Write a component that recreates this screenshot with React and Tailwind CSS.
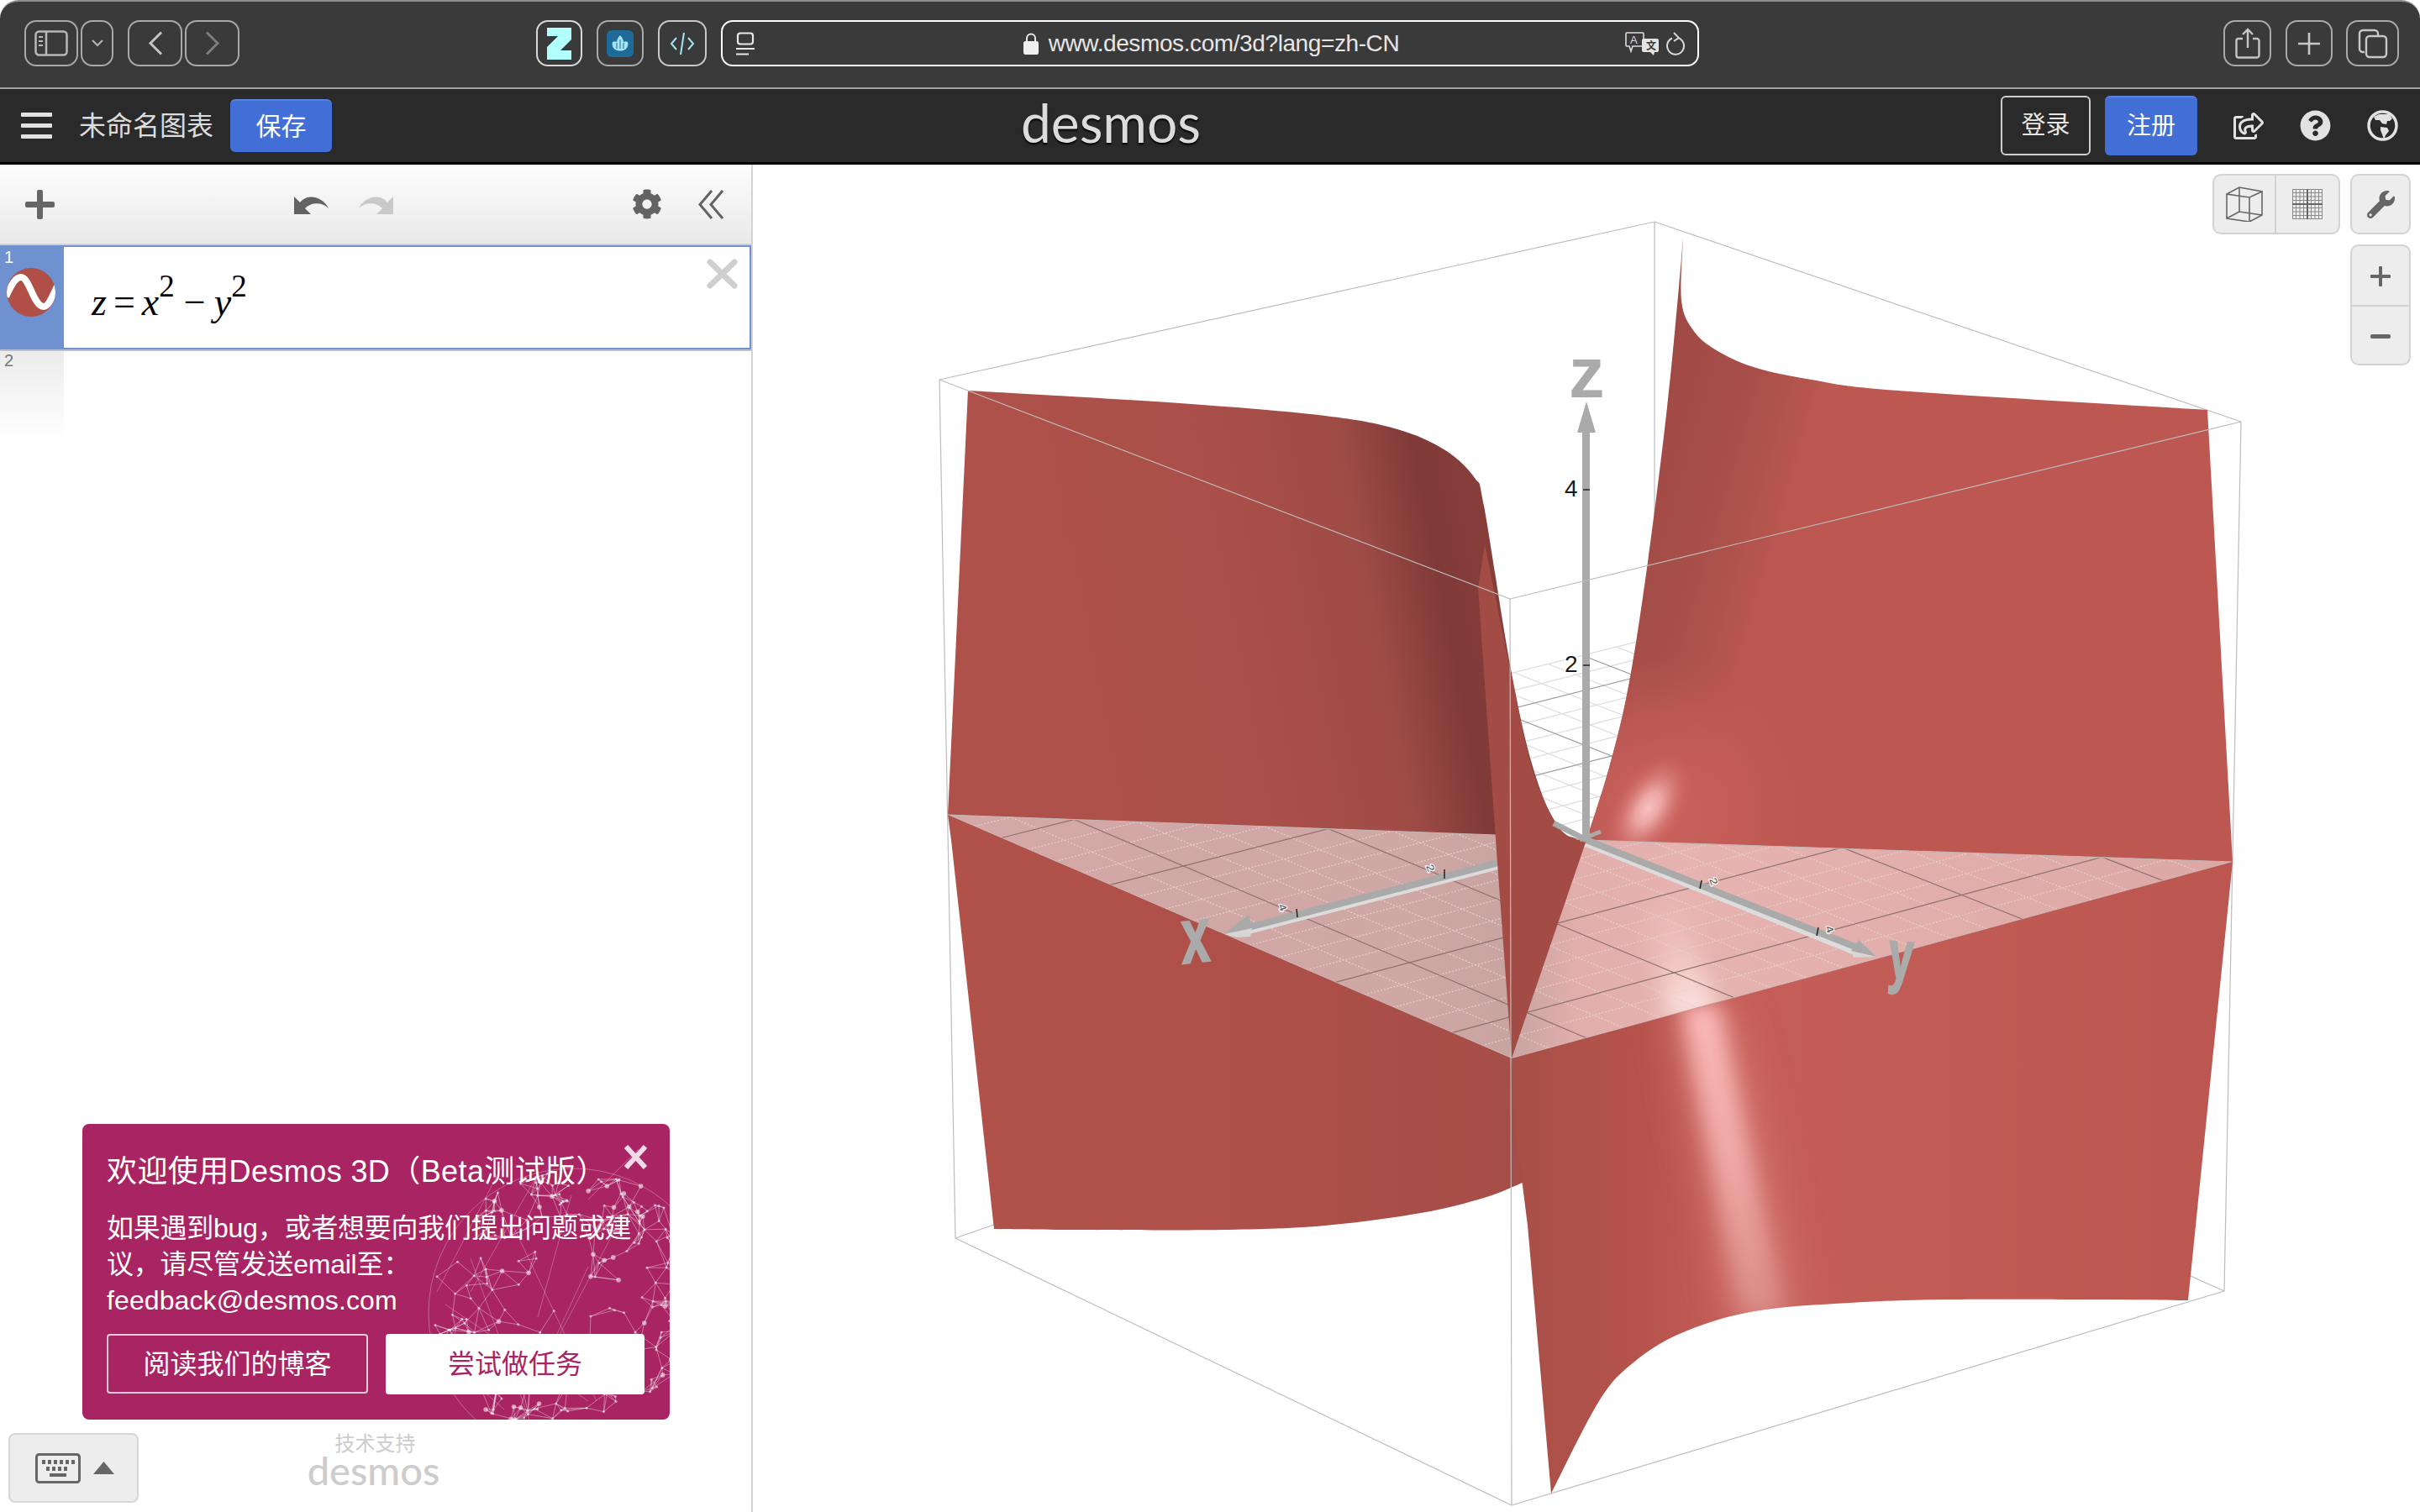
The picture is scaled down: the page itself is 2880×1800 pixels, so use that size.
import React from "react";
import { FaCog, FaWrench, FaRegShareSquare, FaQuestionCircle } from "react-icons/fa";

// catmull-rom through the points, for the curved surface edges
function curve(pts) {
  let d = "";
  for (let i = 0; i < pts.length - 1; i++) {
    const p0 = pts[i - 1] || pts[i];
    const p1 = pts[i];
    const p2 = pts[i + 1];
    const p3 = pts[i + 2] || p2;
    const c1 = [p1[0] + (p2[0] - p0[0]) / 6, p1[1] + (p2[1] - p0[1]) / 6];
    const c2 = [p2[0] - (p3[0] - p1[0]) / 6, p2[1] - (p3[1] - p1[1]) / 6];
    d += ` C${c1[0]} ${c1[1]} ${c2[0]} ${c2[1]} ${p2[0]} ${p2[1]}`;
  }
  return d;
}

const L = [1128, 970];
const P = [1799, 1260];
const R = [2657, 1026];
const Q = [1964, 760];

// plane z=0 homography, unit square to the four screen corners
function makeHomography() {
  const [x0, y0] = L, [x1, y1] = P, [x2, y2] = R, [x3, y3] = Q;
  const dx1 = x1 - x2, dx2 = x3 - x2, sx = x0 - x1 + x2 - x3;
  const dy1 = y1 - y2, dy2 = y3 - y2, sy = y0 - y1 + y2 - y3;
  const den = dx1 * dy2 - dx2 * dy1;
  const g = (sx * dy2 - dx2 * sy) / den;
  const h = (dx1 * sy - sx * dy1) / den;
  const a = x1 - x0 + g * x1, b = x3 - x0 + h * x3;
  const d = y1 - y0 + g * y1, e = y3 - y0 + h * y3;
  return (s, t) => {
    const w = g * s + h * t + 1;
    return [(a * s + b * t + x0) / w, (d * s + e * t + y0) / w];
  };
}

function gridLines() {
  const H = makeHomography();
  const major = [];
  const minor = [];
  for (let i = 0; i <= 20; i++) {
    const v = -5 + i * 0.5;
    if (v === 0) continue;
    const f = i / 20;
    const a1 = H(f, 0), a2 = H(f, 1), b1 = H(0, f), b2 = H(1, f);
    const isMajor = v % 2 === 0;
    (isMajor ? major : minor).push([a1, a2], [b1, b2]);
  }
  return { major, minor };
}

const upperLeft =
  "M1152 465" +
  curve([[1152, 465], [1404, 480], [1577, 495], [1663, 511], [1720, 536], [1755, 569], [1766, 602], [1797, 791], [1823, 909], [1852, 983], [1875, 998], [1888, 1000]]) +
  " L1128 970 Z";

const upperRight =
  "M2003 283" +
  curve([[2003, 283], [2001, 358], [2015, 393], [2041, 416], [2087, 437], [2156, 452], [2259, 465], [2627, 488]]) +
  " L2657 1026 L1888 1000" +
  curve([[1888, 1000], [1915, 914], [1938, 817], [1961, 669], [1984, 485], [1998, 342], [2003, 283]]) +
  " Z";

const sliver =
  "M1767 648 L1759 699 L1766 800 L1782 1027 L1799 1260 L1888 1000" +
  curve([[1888, 1000], [1872, 998], [1852, 980], [1824, 917], [1798, 800], [1767, 648]]) +
  " Z";

const lowerLeft =
  "M1128 970 L1132 1000 L1183 1463" +
  curve([[1183, 1463], [1278, 1464], [1462, 1464], [1577, 1459], [1691, 1444], [1766, 1426], [1812, 1408]]) +
  " L1799 1260 Z";

const lowerRight =
  "M1799 1260 L2657 1026 L2604 1548" +
  curve([[2604, 1548], [2506, 1547], [2317, 1547], [2202, 1551], [2087, 1561], [2001, 1587], [1944, 1622], [1903, 1668], [1846, 1778]]) +
  " L1818 1459 L1800 1316 Z";

const planeFront = "M1128 970 L1780 994 L1888 1000 L2657 1026 L1799 1260 Z";

function Graph3D() {
  const { major, minor } = gridLines();
  const boxLine = "#bcbcbc";
  const seg = (pts, props, key) => <line key={key} x1={pts[0][0]} y1={pts[0][1]} x2={pts[1][0]} y2={pts[1][1]} {...props} />;

  return (
    <svg viewBox="896 196 1984 1604" className="absolute inset-0 w-[1984px] h-[1604px]">
      <defs>
        <linearGradient id="ul" gradientUnits="userSpaceOnUse" x1="1152" y1="700" x2="1791" y2="576">
          <stop offset="0" stopColor="#ae514a" />
          <stop offset="0.5" stopColor="#aa4f49" />
          <stop offset="0.72" stopColor="#9e4b46" />
          <stop offset="0.85" stopColor="#7f3a37" />
          <stop offset="1" stopColor="#8b403c" />
        </linearGradient>
        <linearGradient id="ur" gradientUnits="userSpaceOnUse" x1="1940" y1="560" x2="2140" y2="618">
          <stop offset="0" stopColor="#a04a45" />
          <stop offset="0.5" stopColor="#a84f49" />
          <stop offset="1" stopColor="#bc5851" />
        </linearGradient>
        <linearGradient id="ll" gradientUnits="userSpaceOnUse" x1="1128" y1="1200" x2="1799" y2="1200">
          <stop offset="0" stopColor="#b0524a" />
          <stop offset="0.55" stopColor="#ae5049" />
          <stop offset="0.85" stopColor="#a84e48" />
          <stop offset="1" stopColor="#a54e47" />
        </linearGradient>
        <linearGradient id="lr" gradientUnits="userSpaceOnUse" x1="1799" y1="1300" x2="2657" y2="1300">
          <stop offset="0" stopColor="#a84f47" />
          <stop offset="0.18" stopColor="#b5534c" />
          <stop offset="0.3" stopColor="#c55e58" />
          <stop offset="0.5" stopColor="#c25c56" />
          <stop offset="1" stopColor="#bb5750" />
        </linearGradient>
        <linearGradient id="pl" gradientUnits="userSpaceOnUse" x1="1128" y1="1000" x2="2657" y2="1000">
          <stop offset="0" stopColor="#d4a8a6" />
          <stop offset="0.36" stopColor="#cfa7a5" />
          <stop offset="0.44" stopColor="#c8a4a1" />
          <stop offset="0.49" stopColor="#e2aeab" />
          <stop offset="0.58" stopColor="#e6b3b0" />
          <stop offset="1" stopColor="#dba8a5" />
        </linearGradient>
        <linearGradient id="band" gradientUnits="userSpaceOnUse" x1="2020" y1="1210" x2="2098" y2="1545">
          <stop offset="0" stopColor="#fbb9b6" />
          <stop offset="0.5" stopColor="#efaaa7" />
          <stop offset="1" stopColor="#da8e89" />
        </linearGradient>
        <linearGradient id="planeGlow" gradientUnits="userSpaceOnUse" x1="1975" y1="1060" x2="2010" y2="1200">
          <stop offset="0" stopColor="#f4c6c3" stopOpacity="0" />
          <stop offset="0.55" stopColor="#f4c9c6" stopOpacity="0.7" />
          <stop offset="1" stopColor="#fbe2e0" />
        </linearGradient>
        <radialGradient id="warm" gradientUnits="userSpaceOnUse" cx="1965" cy="965" r="190">
          <stop offset="0" stopColor="#cf6460" stopOpacity="0.95" />
          <stop offset="0.6" stopColor="#c65e59" stopOpacity="0.6" />
          <stop offset="1" stopColor="#bc5851" stopOpacity="0" />
        </radialGradient>
        <radialGradient id="spot">
          <stop offset="0" stopColor="#f8bfbe" />
          <stop offset="0.3" stopColor="#eba5a3" />
          <stop offset="0.65" stopColor="#d67a76" stopOpacity="0.7" />
          <stop offset="1" stopColor="#cf6460" stopOpacity="0" />
        </radialGradient>
        <filter id="soft" x="-60%" y="-20%" width="220%" height="140%">
          <feGaussianBlur stdDeviation="12" />
        </filter>
        <filter id="softWide" x="-100%" y="-20%" width="300%" height="140%">
          <feGaussianBlur stdDeviation="26" />
        </filter>
        <clipPath id="clipLR"><path d={lowerRight} /></clipPath>
        <clipPath id="clipUR"><path d={upperRight} /></clipPath>
        <clipPath id="clipPl"><path d={planeFront} /></clipPath>
      </defs>

      {/* back edges of the bounding box */}
      <g stroke={boxLine} strokeWidth="1.2">
        <line x1="1118" y1="452" x2="1969" y2="264" />
        <line x1="1969" y1="264" x2="2667" y2="502" />
        <line x1="1969" y1="264" x2="1969" y2="640" />
        <line x1="1118" y1="452" x2="1137" y2="1474" />
        <line x1="2667" y1="502" x2="2647" y2="1537" />
        <line x1="1137" y1="1474" x2="1200" y2="1452" />
        <line x1="2647" y1="1537" x2="2580" y2="1507" />
      </g>

      {/* grid seen through the gap, on white */}
      <g>
        {minor.map((l, i) => seg(l, { stroke: "#dcdcdc", strokeWidth: 1.2 }, "bm" + i))}
        {major.map((l, i) => seg(l, { stroke: "#9a9a9a", strokeWidth: 1.2 }, "bM" + i))}
      </g>

      <path d={upperLeft} fill="url(#ul)" />
      <path d={upperRight} fill="url(#ur)" />
      <g clipPath="url(#clipUR)">
        <rect x="1775" y="775" width="380" height="380" fill="url(#warm)" />
        <ellipse cx="1962" cy="962" rx="72" ry="40" transform="rotate(-58 1962 962)" fill="url(#spot)" />
      </g>

      <path d={planeFront} fill="url(#pl)" />
      <g clipPath="url(#clipPl)">
        <path d="M1955 1050 L1992 1045 L2045 1210 L1985 1215 Z" fill="url(#planeGlow)" filter="url(#soft)" />
        {minor.map((l, i) => seg(l, { stroke: "#e6cfcd", strokeWidth: 1.2, strokeDasharray: "2 2" }, "fm" + i))}
        {major.map((l, i) => seg(l, { stroke: "#8c7170", strokeWidth: 1.2 }, "fM" + i))}
      </g>
      <path d={planeFront} fill="none" stroke="#c4b4b3" strokeWidth="1.2" />

      {/* x and y axes lying on the plane */}
      <g strokeLinecap="butt">
        <line x1="1888" y1="1003" x2="1482" y2="1108" stroke="#dcdcdc" strokeWidth="10" />
        <line x1="1888" y1="1000" x2="1482" y2="1105" stroke="#aaaaaa" strokeWidth="8" />
        <line x1="1888" y1="1003" x2="2208" y2="1132" stroke="#dcdcdc" strokeWidth="10" />
        <line x1="1888" y1="1000" x2="2210" y2="1128" stroke="#aaaaaa" strokeWidth="8" />
      </g>
      <polygon points="1457,1112 1485,1089 1492,1103 1476,1110" fill="#aaaaaa" />
      <polygon points="1457,1112 1490,1105 1488,1115 1472,1116" fill="#d6d6d6" />
      <polygon points="2233,1139 2212,1119 2203,1132" fill="#aaaaaa" />
      <polygon points="2233,1139 2203,1132 2206,1140" fill="#d6d6d6" />

      <g stroke="#222" strokeWidth="1.5">
        <line x1="1719" y1="1035" x2="1719" y2="1046" />
        <line x1="1543" y1="1082" x2="1544" y2="1092" />
        <line x1="2025" y1="1048" x2="2023" y2="1058" />
        <line x1="2164" y1="1104" x2="2162" y2="1114" />
      </g>
      <g className="font-['Liberation_Sans',sans-serif]" fontSize="15" fill="#555" stroke="#f4f4f4" strokeWidth="3" paintOrder="stroke">
        <text transform="translate(1697,1031) rotate(68) scale(1,0.8)">2</text>
        <text transform="translate(1521,1078) rotate(68) scale(1,0.8)">4</text>
        <text transform="translate(2034,1047) rotate(68) scale(1,0.8)">2</text>
        <text transform="translate(2172,1104) rotate(68) scale(1,0.8)">4</text>
      </g>

      <path d={sliver} fill="#a34c46" />
      <path d={lowerLeft} fill="url(#ll)" />
      <path d={lowerRight} fill="url(#lr)" />
      <g clipPath="url(#clipLR)">
        <path d="M1990 1200 L2058 1200 L2140 1570 L2066 1570 Z" fill="#de8580" opacity="0.65" filter="url(#softWide)" />
        <path d="M2000 1195 L2046 1195 L2122 1565 L2072 1565 Z" fill="url(#band)" filter="url(#soft)" />
      </g>

      {/* y axis stub and origin, in the gap */}
      <line x1="1849" y1="980" x2="1888" y2="1000" stroke="#aaaaaa" strokeWidth="7" />
      <line x1="1905" y1="990" x2="1880" y2="1000" stroke="#aaaaaa" strokeWidth="5" />

      {/* z axis */}
      <rect x="1883" y="512" width="9" height="488" fill="#aaaaaa" />
      <polygon points="1888,478 1877,515 1899,515" fill="#aaaaaa" />
      <g stroke="#222" strokeWidth="1.5">
        <line x1="1884" y1="583" x2="1892" y2="583" />
        <line x1="1884" y1="792" x2="1892" y2="792" />
      </g>
      <g className="font-['Liberation_Sans',sans-serif]" fontSize="28" fill="#1a1a1a" stroke="#ffffff" strokeWidth="4" paintOrder="stroke">
        <text x="1862" y="591">4</text>
        <text x="1862" y="800">2</text>
      </g>
      <g className="font-['Liberation_Sans',sans-serif] font-bold" fill="#aaaaaa" stroke="#aaaaaa">
        <text x="1867" y="473" fontSize="85" strokeWidth="0">z</text>
        <text fontSize="92" strokeWidth="2.5" transform="translate(1407,1147) rotate(-6) skewX(-4) scale(0.66,1)">x</text>
        <text fontSize="84" strokeWidth="2.5" transform="translate(2246,1165) rotate(4) scale(0.62,1)">y</text>
      </g>

      {/* front edges over the surface */}
      <g stroke="#bcbcbc" strokeWidth="1.2">
        <line x1="1118" y1="452" x2="1797" y2="713" />
        <line x1="1797" y1="713" x2="2667" y2="502" />
        <line x1="1797" y1="713" x2="1799" y2="1792" />
        <line x1="1137" y1="1474" x2="1799" y2="1792" />
        <line x1="1799" y1="1792" x2="2647" y2="1537" />
      </g>
    </svg>
  );
}

// seeded so the pattern stays the same between renders
function globeMesh() {
  let seed = 7;
  const rnd = () => {
    seed = (seed * 16807) % 2147483647;
    return seed / 2147483647;
  };
  const clusters = [
    [535, 200, 55, 120, 60],
    [610, 190, 60, 90, 26],
    [620, 65, 60, 45, 40],
    [705, 75, 80, 40, 40],
    [770, 235, 75, 125, 100],
    [600, 330, 80, 25, 40],
    [760, 110, 45, 45, 24],
  ];
  const pts = [];
  clusters.forEach(([cx, cy, rx, ry, n]) => {
    for (let i = 0; i < n; i++) {
      const x = cx + (rnd() * 2 - 1) * rx;
      const y = cy + (rnd() * 2 - 1) * ry;
      const dx = x - 682;
      const dy = y - 225;
      if (dx * dx + dy * dy < 172 * 172) pts.push([x, y, rnd() < 0.15 ? 2.8 : 1.5]);
    }
  });
  const lines = [];
  pts.forEach((p, i) => {
    const near = pts
      .map((q, j) => [q, j, Math.hypot(p[0] - q[0], p[1] - q[1])])
      .filter((r) => r[1] > i && r[2] < 34)
      .sort((a, b) => a[2] - b[2])
      .slice(0, 3);
    near.forEach((r) => lines.push([p, r[0]]));
  });
  return { pts, lines };
}

function GlobeArt() {
  const { pts, lines } = globeMesh();
  const long = [
    [[530, 215], [700, 330]], [[560, 160], [630, 352]], [[700, 170], [640, 300]], [[610, 120], [710, 330]],
    [[640, 60], [560, 200]], [[680, 85], [640, 230]], [[510, 260], [600, 340]], [[735, 120], [660, 262]],
    [[760, 30], [700, 90]], [[520, 200], [600, 45]],
  ];
  return (
    <svg viewBox="98 1338 699 352" className="absolute inset-0 w-[699px] h-[352px]">
      <g transform="translate(0,1338)">
        <g stroke="#ffffff" strokeOpacity="0.38" strokeWidth="1">
          <circle cx="682" cy="225" r="172" fill="none" strokeOpacity="0.3" />
          {long.map((l, i) => (
            <line key={"g" + i} x1={l[0][0]} y1={l[0][1]} x2={l[1][0]} y2={l[1][1]} strokeOpacity="0.28" />
          ))}
          {lines.map((l, i) => (
            <line key={i} x1={l[0][0]} y1={l[0][1]} x2={l[1][0]} y2={l[1][1]} />
          ))}
        </g>
        {pts.map((p, i) => (
          <circle key={i} cx={p[0]} cy={p[1]} r={p[2]} fill="#ffffff" fillOpacity="0.55" />
        ))}
      </g>
    </svg>
  );
}

function BrowserButton({ className, children }) {
  return (
    <div className={`h-[55px] rounded-[14px] border-2 border-[#a9a9a9] flex items-center justify-center shrink-0 ${className}`}>
      {children}
    </div>
  );
}

function BrowserBar() {
  return (
    <div className="h-[106px] shrink-0 bg-[#3a3a3a] border-t-2 border-b-2 border-t-[#8e8e8e] border-b-[#a2a2a2] rounded-t-[22px] pt-[22px] pl-[29px] flex items-start">
      <BrowserButton className="w-[64px]">
        <svg width="40" height="31" viewBox="0 0 40 31" fill="none" stroke="#b8b8b8" strokeWidth="2.5">
          <rect x="1.5" y="1.5" width="37" height="28" rx="4" />
          <line x1="14" y1="2" x2="14" y2="29" />
          <path d="M5 8h5M5 13h5M5 18h5" strokeWidth="2" />
        </svg>
      </BrowserButton>
      <BrowserButton className="w-[39px] ml-[3px]">
        <svg width="14" height="9" viewBox="0 0 14 9" fill="none" stroke="#b4b4b4" strokeWidth="2.2"><path d="M1 1l6 6 6-6" /></svg>
      </BrowserButton>
      <BrowserButton className="w-[65px] ml-[17px]">
        <svg width="18" height="29" viewBox="0 0 18 29" fill="none" stroke="#c4c4c4" strokeWidth="3"><path d="M16 1.5L3 14.5l13 13" /></svg>
      </BrowserButton>
      <BrowserButton className="w-[65px] ml-[3px]">
        <svg width="18" height="29" viewBox="0 0 18 29" fill="none" stroke="#7e7e7e" strokeWidth="3"><path d="M2 1.5l13 13-13 13" /></svg>
      </BrowserButton>

      <BrowserButton className="w-[55px] ml-[353px] border-[#d8d8d8]">
        <svg width="29" height="38" viewBox="0 0 29 38" fill="#b1ffff"><polygon points="0,0 29,0 29,14 16,27 29,27 29,38 0,38 0,23 13,10 0,10" /></svg>
      </BrowserButton>
      <BrowserButton className="w-[56px] ml-[17px]">
        <svg width="32" height="32" viewBox="0 0 32 32">
          <rect width="32" height="32" rx="6" fill="#1e6a98" />
          <path d="M16 6c3 3 4 6 4 8 2-1 3-1 5 0 1 3 0 7-3 9-4 2-8 2-12 0-3-2-4-6-3-9 2-1 3-1 5 0 0-2 1-5 4-8z" fill="#a5e4f5" />
          <path d="M16 11v11M12 15v7M20 15v7" stroke="#1e6a98" strokeWidth="1" />
        </svg>
      </BrowserButton>
      <BrowserButton className="w-[58px] ml-[17px] border-[#c8c8c8]">
        <svg width="30" height="30" viewBox="0 0 30 30" fill="none" stroke="#9fe6f6" strokeWidth="2"><path d="M8 8l-6 7 6 7M22 8l6 7-6 7M17 2l-4 26" /></svg>
      </BrowserButton>

      <div className="w-[1164px] h-[55px] ml-[17px] rounded-[14px] border-2 border-white flex items-center pl-[15px] pr-[8px] shrink-0">
        <svg width="24" height="28" viewBox="0 0 24 28" fill="none" stroke="#e8e8e8" strokeWidth="2.2">
          <rect x="3" y="1.5" width="18" height="13" rx="3" />
          <path d="M1 20h22M1 26.5h15" />
        </svg>
        <div className="flex-1 flex items-center justify-center pl-[50px] gap-[12px]">
          <svg width="18" height="26" viewBox="0 0 18 26">
            <path d="M4 11V6.5a5 5 0 0 1 10 0V11" fill="none" stroke="#e8e8e8" strokeWidth="2" />
            <rect y="10" width="18" height="16" rx="2.5" fill="#efefef" />
          </svg>
          <span className="text-[28px] leading-none text-[#e6e6e6] tracking-[-0.4px]">www.desmos.com/3d?lang=zh-CN</span>
        </div>
        <svg width="40" height="28" viewBox="0 0 40 28" className="mr-[14px]">
          <path d="M2 1h19a1 1 0 0 1 1 1v15H9l-2 6-2-6H2a1 1 0 0 1-1-1V2a1 1 0 0 1 1-1z" fill="none" stroke="#dcdcdc" strokeWidth="1.6" />
          <text x="6" y="14" fontSize="13" fill="#dcdcdc">A</text>
          <path d="M22 8h16a2 2 0 0 1 2 2v12a2 2 0 0 1-2 2h-3l-1 4-4-4h-8a2 2 0 0 1-2-2V10a2 2 0 0 1 2-2z" fill="#e4e4e4" />
          <text x="25" y="21" fontSize="12" fontWeight="700" fill="#3a3a3a" className="font-['Noto_Sans_CJK_SC',sans-serif]">文</text>
        </svg>
        <svg width="24" height="28" viewBox="0 0 24 28" fill="none" stroke="#dcdcdc" strokeWidth="2" className="-ml-[6px] mr-[6px]">
          <path d="M8 7.5a10 10 0 1 0 7-.4" />
          <path d="M10 1l6 6-6 4" strokeWidth="1.8" />
        </svg>
      </div>

      <BrowserButton className="w-[57px] ml-auto">
        <svg width="30" height="37" viewBox="0 0 30 37" fill="none" stroke="#c6c6c6" strokeWidth="2.4">
          <path d="M9 13H4a2.5 2.5 0 0 0-2.5 2.5V33A2.5 2.5 0 0 0 4 35.5h22a2.5 2.5 0 0 0 2.5-2.5V15.500A2.500 2.500 0 0 0 26 13h-5" />
          <path d="M15 24V2M9 8l6-6 6 6" />
        </svg>
      </BrowserButton>
      <BrowserButton className="w-[56px] ml-[17px]">
        <svg width="28" height="28" viewBox="0 0 28 28" stroke="#c8c8c8" strokeWidth="2.6"><path d="M14 1v26M1 14h26" /></svg>
      </BrowserButton>
      <BrowserButton className="w-[63px] ml-[16px] mr-[25px]">
        <svg width="36" height="36" viewBox="0 0 36 36" fill="none" stroke="#c8c8c8" strokeWidth="2.4">
          <path d="M8 28H6a4 4 0 0 1-4-4V6a4 4 0 0 1 4-4h14a4 4 0 0 1 4 4v2" />
          <rect x="10" y="9" width="24" height="25" rx="4" />
        </svg>
      </BrowserButton>
    </div>
  );
}

function AppHeader() {
  return (
    <div className="h-[90px] shrink-0 bg-[#2a2a2a] border-b-[3px] border-black flex items-center">
      <div className="w-[1215px] shrink-0 flex items-center pl-[25px]">
        <div className="w-[37px] flex flex-col gap-[8px]">
          <div className="h-[5px] rounded-[1px] bg-[#e2e2e2]" />
          <div className="h-[5px] rounded-[1px] bg-[#e2e2e2]" />
          <div className="h-[5px] rounded-[1px] bg-[#e2e2e2]" />
        </div>
        <span className="ml-[32px] w-[180px] text-[32px] leading-none text-[#dcdcdc]">未命名图表</span>
        <button className="w-[121px] h-[63px] rounded-[6px] bg-[#426fd6] border-t-2 border-[#5a82dc] text-[30px] leading-none text-white">保存</button>
      </div>
      <div className="w-[214px] shrink-0 text-center font-['Lato',sans-serif] text-[64px] leading-none text-[#dcdcdc] [text-shadow:0_2px_2px_#000] pb-[8px]">desmos</div>
      <div className="flex-1 flex items-center justify-end pr-[26px]">
        <button className="w-[107px] h-[71px] rounded-[6px] border-2 border-[#cfcfcf] text-[29px] leading-none text-[#e6e6e6]">登录</button>
        <button className="w-[110px] h-[71px] ml-[17px] rounded-[6px] bg-[#426fd6] border-t-2 border-[#5a82dc] text-[29px] leading-none text-white">注册</button>
        <FaRegShareSquare className="ml-[42px] w-[38px] h-[32px] text-[#e2e2e2]" />
        <FaQuestionCircle className="ml-[42px] w-[37px] h-[37px] text-[#e2e2e2]" />
        <svg width="37" height="37" viewBox="0 0 37 37" className="ml-[43px]">
          <circle cx="18.5" cy="18.5" r="16.500" fill="none" stroke="#e2e2e2" strokeWidth="3.500" />
          <path d="M8 8l6-3 12 0 4 5-3 3-3 0-1 4-5-1-3-4-5 0z" fill="#e2e2e2" />
          <path d="M16 20l8 1 2 4-4 5-2 5-2-6-2-5z" fill="#e2e2e2" />
        </svg>
      </div>
    </div>
  );
}

function ExpressionPanel() {
  return (
    <div className="w-[896px] shrink-0 border-r-2 border-[#d4d4d4] flex flex-col h-full">
      <div className="h-[96px] shrink-0 border-b-2 border-[#cfcfcf] bg-gradient-to-b from-[#fdfdfd] to-[#e9e9e9] flex items-center pl-[30px] pr-[33px]">
        <svg width="35" height="35" viewBox="0 0 35 35" fill="#666"><path d="M14 2a2 2 0 0 1 2-2h3a2 2 0 0 1 2 2v12h12a2 2 0 0 1 2 2v3a2 2 0 0 1-2 2H21v12a2 2 0 0 1-2 2h-3a2 2 0 0 1-2-2V21H2a2 2 0 0 1-2-2v-3a2 2 0 0 1 2-2h12z" /></svg>
        <svg width="42" height="23" viewBox="0 0 42 23" fill="#636363" className="ml-[285px]"><path d="M0 2L0 23 20 23 13 16C20 9 32 8 41 16 35 3 17-3 7 9z" /></svg>
        <svg width="42" height="23" viewBox="0 0 42 23" fill="#c9c9c9" className="ml-[34px]"><path d="M42 2L42 23 22 23 29 16C22 9 10 8 1 16 7 3 25-3 35 9z" /></svg>
        <FaCog className="ml-auto w-[36px] h-[36px] text-[#636363]" />
        <svg width="31" height="35" viewBox="0 0 31 35" fill="none" stroke="#636363" strokeWidth="3" className="ml-[42px]"><path d="M17 1L3 17.500 17 34M30 1L16 17.500 30 34" /></svg>
      </div>

      <div className="h-[124px] shrink-0 flex border-2 border-[#7091d0] bg-white relative">
        <div className="w-[76px] shrink-0 -ml-[2px] bg-[#7091d0] relative">
          <span className="absolute left-[5px] top-[2px] text-[20px] leading-none text-white">1</span>
          <svg width="58" height="58" viewBox="0 0 58 58" className="absolute left-[8px] top-[25px]">
            <defs><clipPath id="iconClip"><circle cx="29" cy="29" r="29" /></clipPath></defs>
            <circle cx="29" cy="29" r="29" fill="#b04f47" />
            <path d="M-1 34C6 20 10 11 17 11C27 11 32 46 44 46C50 46 54 34 60 22" fill="none" stroke="#fff" strokeWidth="8" clipPath="url(#iconClip)" />
          </svg>
        </div>
        <div className="pl-[33px] pt-[41px] flex items-baseline font-['Liberation_Serif',serif] text-[46px] leading-[50px] text-black">
          <i>z</i>
          <span className="ml-[8px]">=</span>
          <i className="ml-[8px]">x</i>
          <sup className="text-[37px] leading-none -top-[22px] relative align-baseline">2</sup>
          <span className="ml-[11px]">−</span>
          <i className="ml-[10px]">y</i>
          <sup className="text-[37px] leading-none -top-[22px] relative align-baseline">2</sup>
        </div>
        <svg width="37" height="36" viewBox="0 0 37 36" className="absolute right-[14px] top-[14px]" stroke="#cfcfcf" strokeWidth="7" strokeLinecap="round"><path d="M4 4l29 28M33 4L4 32" /></svg>
      </div>

      <div className="h-[2px] shrink-0 bg-[#bcc3d6]" />
      <div className="h-[108px] shrink-0 w-[76px] bg-gradient-to-b from-[#ececec] to-white pl-[5px] pt-[1px] text-[20px] leading-none text-[#777]">2</div>

      <div className="mt-auto ml-[98px] w-[699px] h-[352px] shrink-0 rounded-[8px] bg-[#a82463] relative overflow-hidden text-white">
        <GlobeArt />
        <div className="relative pl-[29px] pt-[33px]">
          <div className="text-[36px] leading-[48px] tracking-[0.4px] whitespace-nowrap">欢迎使用Desmos 3D（Beta测试版）</div>
          <div className="mt-[22px] text-[32px] leading-[43px] tracking-[-0.25px] w-[650px]">
            <div className="whitespace-nowrap">如果遇到bug，或者想要向我们提出问题或建</div>
            <div className="whitespace-nowrap">议，请尽管发送email至：</div>
            <div className="whitespace-nowrap tracking-[0.1px]">feedback@desmos.com</div>
          </div>
          <div className="mt-[18px] flex gap-[21px]">
            <button className="w-[311px] h-[71px] rounded-[4px] border-2 border-[#e9cbd9] bg-[#a82463] text-[32px] leading-none">阅读我们的博客</button>
            <button className="w-[308px] h-[72px] rounded-[4px] bg-white text-[32px] leading-none text-[#a82463]">尝试做任务</button>
          </div>
        </div>
        <svg width="29" height="29" viewBox="0 0 29 29" className="absolute left-[644px] top-[25px]" stroke="#f1dbe6" strokeWidth="6"><path d="M3 2l23 25M26 2L3 27" /></svg>
      </div>

      <div className="mt-[16px] h-[94px] shrink-0 flex items-start pl-[10px]">
        <div className="w-[155px] h-[83px] rounded-[8px] border-2 border-[#d6d6d6] bg-[#ededed] flex items-center pl-[30px]">
          <svg width="54" height="36" viewBox="0 0 54 36">
            <rect x="1.500" y="1.500" width="51" height="33" rx="3" fill="none" stroke="#666" strokeWidth="3" />
            <g fill="#666">
              <rect x="8" y="8" width="4" height="5" /><rect x="15" y="8" width="4" height="5" /><rect x="22" y="8" width="4" height="5" /><rect x="29" y="8" width="4" height="5" /><rect x="36" y="8" width="4" height="5" /><rect x="43" y="8" width="4" height="5" />
              <rect x="13" y="16" width="4" height="5" /><rect x="20" y="16" width="4" height="5" /><rect x="27" y="16" width="4" height="5" /><rect x="34" y="16" width="4" height="5" />
              <rect x="17" y="24" width="20" height="4" />
            </g>
          </svg>
          <svg width="25" height="15" viewBox="0 0 25 15" fill="#666" className="ml-[15px]"><path d="M12.500 0L25 15H0z" /></svg>
        </div>
        <div className="ml-[201px] w-[157px] flex flex-col items-center text-[#cdcdcd]">
          <span className="text-[24px] leading-[26px] translate-x-[2px]">技术支持</span>
          <span className="font-['Lato',sans-serif] font-medium text-[47px] leading-[36px]">desmos</span>
        </div>
      </div>
    </div>
  );
}

function GraphControls() {
  const btn = "bg-[#ededed] border-2 border-[#d3d3d3] rounded-[10px]";
  return (
    <div className="absolute top-[11px] right-[11px] flex flex-col items-end gap-[12px]">
      <div className="flex gap-[12px]">
        <div className={`w-[152px] h-[72px] flex ${btn}`}>
          <div className="w-[74px] border-r-2 border-[#d3d3d3] flex items-center justify-center">
            <svg width="44" height="42" viewBox="0 0 44 42" fill="none" stroke="#666" strokeWidth="1.600">
              <path d="M1 9L16 1l27 5-15 7zM1 9v29l27 4V13M43 6v28l-15 8M16 1v29L1 38M16 30l27 4" />
            </svg>
          </div>
          <div className="flex-1 flex items-center justify-center">
            <svg width="36" height="36" viewBox="0 0 36 36" fill="none" stroke="#8a8a8a" strokeWidth="1">
              <rect x="0.500" y="0.500" width="35" height="35" />
              <path d="M4.500 0v36M9 0v36M13.500 0v36M22.500 0v36M27 0v36M31.500 0v36M0 4.500h36M0 9h36M0 13.500h36M0 22.500h36M0 27h36M0 31.500h36" />
              <path d="M18 0v36M0 18h36" stroke="#666" strokeWidth="2" />
            </svg>
          </div>
        </div>
        <div className={`w-[72px] h-[72px] flex items-center justify-center ${btn}`}>
          <FaWrench className="w-[33px] h-[33px] text-[#666]" />
        </div>
      </div>
      <div className={`w-[72px] h-[144px] flex flex-col ${btn}`}>
        <div className="h-[72px] pt-[2px] border-b-2 border-[#d3d3d3] flex items-center justify-center">
          <svg width="24" height="24" viewBox="0 0 24 24" fill="#666"><path d="M10 1a1 1 0 0 1 1-1h2a1 1 0 0 1 1 1v9h9a1 1 0 0 1 1 1v2a1 1 0 0 1-1 1h-9v9a1 1 0 0 1-1 1h-2a1 1 0 0 1-1-1v-9H1a1 1 0 0 1-1-1v-2a1 1 0 0 1 1-1h9z" /></svg>
        </div>
        <div className="flex-1 pt-[2px] flex items-center justify-center">
          <div className="w-[24px] h-[5px] rounded-[2px] bg-[#666]" />
        </div>
      </div>
    </div>
  );
}

export default function App() {
  return (
    <div className="w-[2880px] h-[1800px] overflow-hidden bg-white flex flex-col font-['Liberation_Sans','Noto_Sans_CJK_SC',sans-serif]">
      <BrowserBar />
      <AppHeader />
      <div className="flex-1 flex min-h-0">
        <ExpressionPanel />
        <div className="flex-1 relative">
          <Graph3D />
          <GraphControls />
        </div>
      </div>
    </div>
  );
}
